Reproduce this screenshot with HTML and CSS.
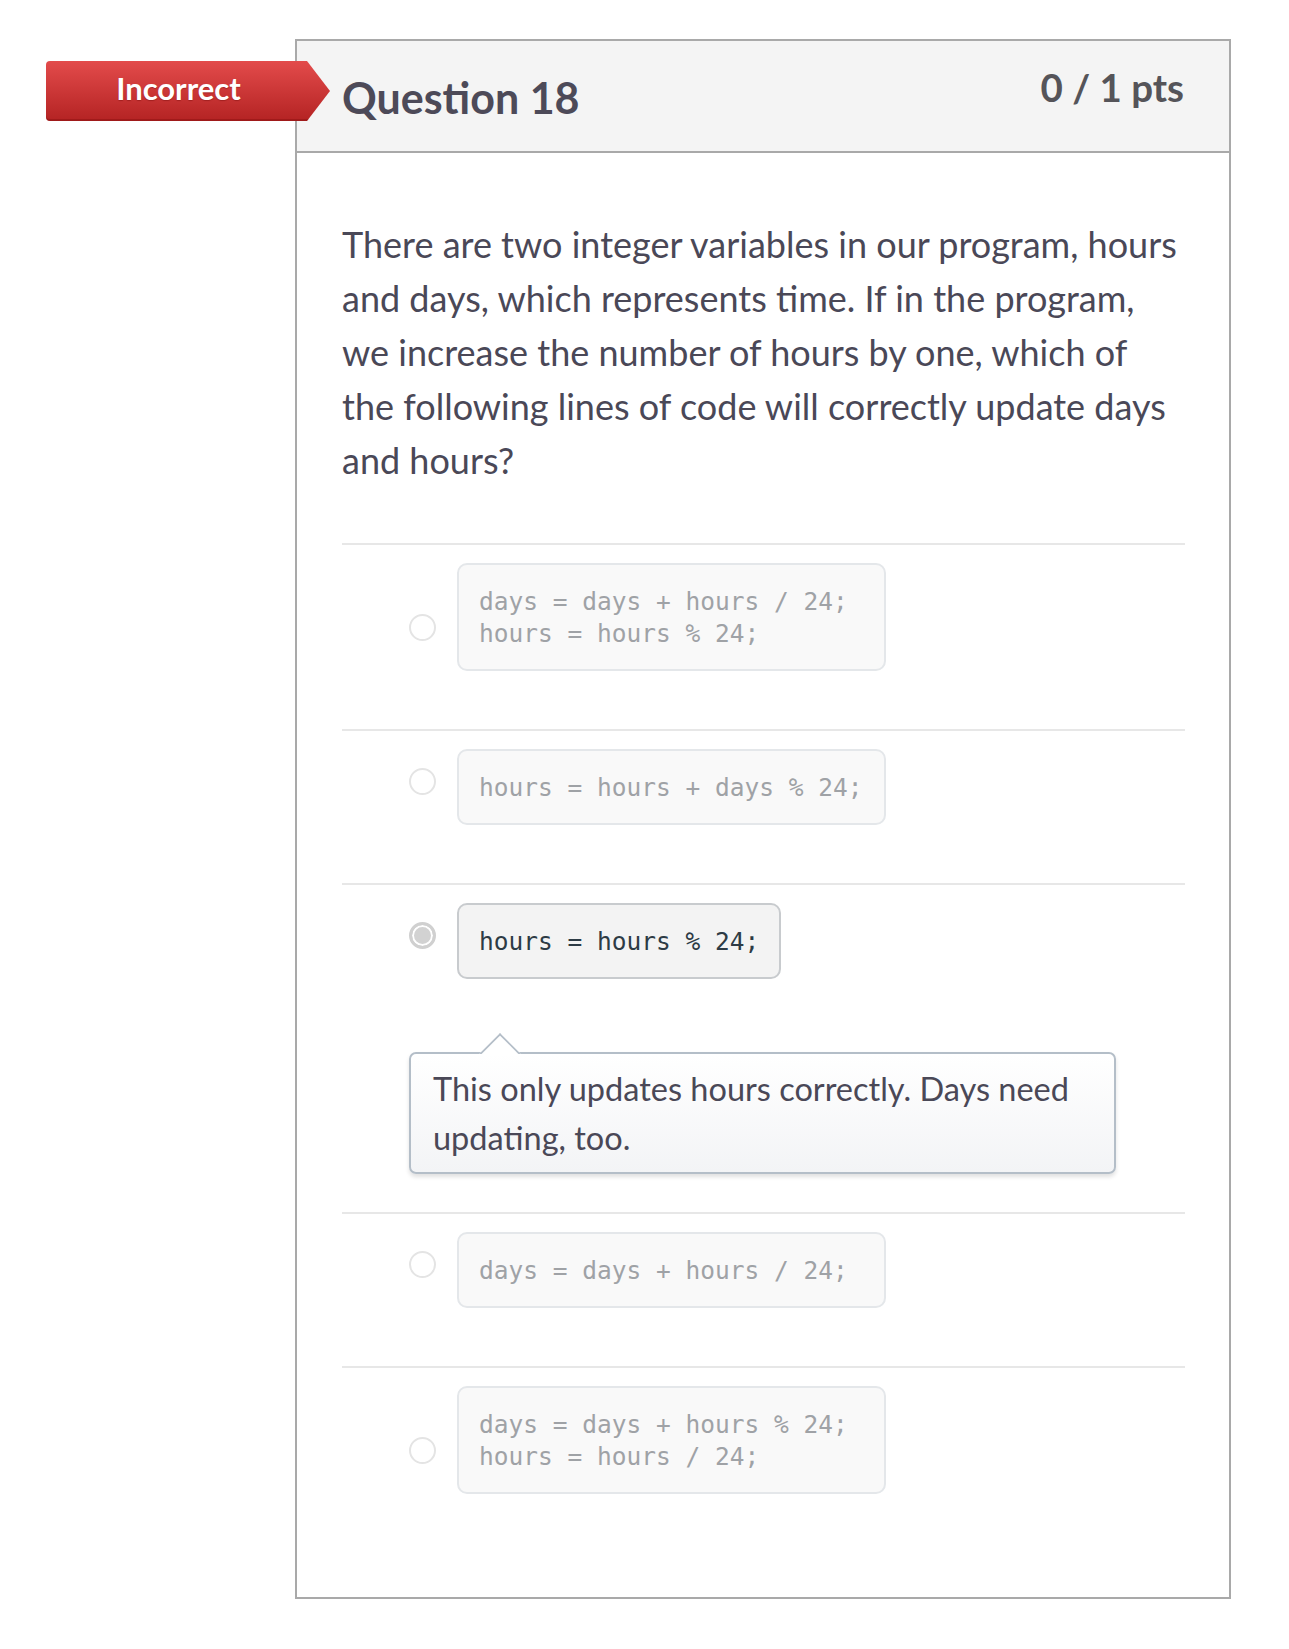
FILE: index.html
```html
<!DOCTYPE html>
<html lang="en">
<head>
<meta charset="utf-8">
<title>Question 18</title>
<link rel="stylesheet" href="styles.css">
</head>
<body>
<div class="page">
  <div class="question">
    <div class="badge">Incorrect</div>
    <div class="q-header">
      <h2 class="q-title">Question 18</h2>
      <span class="q-pts">0 / 1 pts</span>
    </div>
    <div class="q-body">
      <p class="q-text">There are two integer variables in our program, hours and days, which represents time. If in the program, we increase the number of hours by one, which of the following lines of code will correctly update days and hours?</p>
      <div class="answers">
        <div class="answer">
          <div class="answer-row">
            <span class="radio"></span>
            <pre class="code">days = days + hours / 24;
hours = hours % 24;</pre>
          </div>
        </div>
        <div class="answer">
          <div class="answer-row">
            <span class="radio"></span>
            <pre class="code">hours = hours + days % 24;</pre>
          </div>
        </div>
        <div class="answer answer-selected">
          <div class="answer-row">
            <span class="radio radio-checked"></span>
            <pre class="code code-selected">hours = hours % 24;</pre>
          </div>
          <div class="comment">This only updates hours correctly. Days need updating, too.</div>
        </div>
        <div class="answer">
          <div class="answer-row">
            <span class="radio"></span>
            <pre class="code">days = days + hours / 24;</pre>
          </div>
        </div>
        <div class="answer">
          <div class="answer-row">
            <span class="radio"></span>
            <pre class="code">days = days + hours % 24;
hours = hours / 24;</pre>
          </div>
        </div>
      </div>
    </div>
  </div>
</div>
</body>
</html>
```

FILE: styles.css
```css
html, body {
  margin: 0;
  background: #ffffff;
}

body {
  font-family: Lato, "Liberation Sans", sans-serif;
}

.page {
  padding: 39px 0 50px 295px;
}

.question {
  position: relative;
  width: 936px;
  box-sizing: border-box;
  border: 2px solid #a9a9a9;
}

.badge {
  position: absolute;
  left: -251px;
  top: 20px;
  width: 284px;
  height: 60px;
  box-sizing: border-box;
  padding: 0 23px 0 4px;
  border-radius: 4px 0 0 4px;
  background: linear-gradient(#e34b4b, #b42323);
  box-shadow: inset 0 -2px 0 rgba(120, 10, 10, 0.35);
  clip-path: polygon(0 0, 261px 0, 100% 50%, 261px 100%, 0 100%);
  color: #ffffff;
  font-weight: 700;
  font-size: 31px;
  line-height: 54px;
  text-align: center;
  text-shadow: 0 1px 1px rgba(100, 0, 0, 0.35);
}

.q-header {
  display: flex;
  justify-content: space-between;
  align-items: flex-start;
  height: 110px;
  padding: 0 45px;
  background: #f4f4f4;
  border-bottom: 2px solid #a9a9a9;
}

.q-title {
  margin: 31px 0 0;
  font-size: 43px;
  font-weight: 700;
  line-height: 1.2;
  color: #4d4a58;
}

.q-pts {
  margin-top: 23px;
  font-size: 38.5px;
  font-weight: 700;
  line-height: 1.2;
  color: #555459;
}

.q-body {
  padding: 64px 44px 45px 45px;
}

.q-text {
  max-width: 837px;
  margin: 0 0 56px;
  font-size: 36px;
  line-height: 54px;
  color: #4a4857;
}

.answer {
  border-top: 2px solid #e7e7e7;
  padding: 18px 0 58px;
}

.answer-selected {
  padding-bottom: 38px;
}

.answer-row {
  display: flex;
  align-items: flex-end;
  gap: 21px;
  padding-left: 67px;
}

.radio {
  flex: none;
  width: 27px;
  height: 27px;
  box-sizing: border-box;
  margin-bottom: 30px;
  border-radius: 50%;
  border: 2px solid #e4e4e4;
  background: #ffffff;
}

.radio-checked {
  border: 3px solid #d0d0d0;
  background: #d2d2d2;
  box-shadow: inset 0 0 0 2px #ffffff;
}

.code {
  margin: 0;
  width: 429px;
  box-sizing: border-box;
  padding: 21px 20px 19px;
  border: 2px solid #e4e7ea;
  border-radius: 10px;
  background: #f9f9f9;
  color: #9fa2a6;
  font-family: "DejaVu Sans Mono", "Liberation Mono", monospace;
  font-size: 24.5px;
  line-height: 32px;
}

.code-selected {
  width: auto;
  background: #f3f3f3;
  border-color: #c8cbce;
  color: #2d3b45;
}

.comment {
  position: relative;
  width: 707px;
  box-sizing: border-box;
  margin: 73px 0 0 67px;
  padding: 10px 22px;
  border: 2px solid #b4bec8;
  border-radius: 7px;
  background: linear-gradient(#ffffff, #f3f4f6);
  box-shadow: 0 3px 4px rgba(0, 0, 0, 0.12);
  font-size: 32.5px;
  line-height: 49px;
  color: #4a4857;
}

.comment::before {
  content: "";
  position: absolute;
  top: -15px;
  left: 74px;
  width: 30px;
  height: 30px;
  box-sizing: border-box;
  background: #ffffff;
  border-top: 2px solid #b4bec8;
  border-left: 2px solid #b4bec8;
  transform: rotate(45deg);
  clip-path: polygon(0 0, 100% 0, 0 100%);
}
```
